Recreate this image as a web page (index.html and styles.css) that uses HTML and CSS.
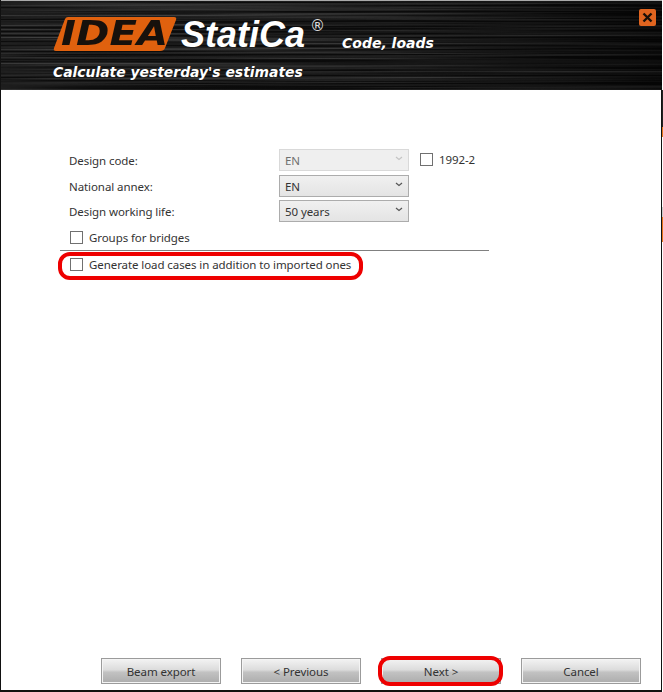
FILE: index.html
```html
<!DOCTYPE html>
<html lang="en">
<head>
	<meta charset="UTF-8">
	<title>Code, loads</title>
	<link rel="stylesheet" href="styles.css">
</head>
<body>
	<div class="window">
		<div class="header">
			<svg class="streaks" width="662" height="90">
				<defs>
					<filter id="brushed" x="0" y="0" width="100%" height="100%">
						<feTurbulence type="fractalNoise" baseFrequency="0.002 0.5" numOctaves="3" seed="7"/>
						<feColorMatrix values="0 0 0 0 1  0 0 0 0 1  0 0 0 0 1  1.4 0 0 0 -0.5"/>
					</filter>
					<linearGradient id="fade" x1="0" x2="1" y1="0" y2="0">
						<stop offset="0" stop-color="#000" stop-opacity="0"/>
						<stop offset="0.6" stop-color="#000" stop-opacity="0.1"/>
						<stop offset="1" stop-color="#000" stop-opacity="0.6"/>
					</linearGradient>
				</defs>
				<rect width="662" height="90" fill="#0c0c0c"/>
				<rect width="662" height="90" filter="url(#brushed)" opacity="0.36"/>
				<rect width="662" height="90" fill="url(#fade)"/>
			</svg>
			<div class="logo">
				<svg class="logo-plate" width="124" height="36" viewBox="0 0 124 36">
					<path d="M15 1H121Q124 1 123 4L112 32Q111 35 107 35H3Q0 35 1 32L12 3Q13 1 15 1Z" fill="#e0610e"/>
				</svg>
				<span class="logo-text">IDEA</span>
			</div>
			<span class="brand">StatiCa</span>
			<span class="reg">®</span>
			<span class="section">Code, loads</span>
			<span class="tagline">Calculate yesterday's estimates</span>
			<button class="close">
				<svg width="11" height="11" viewBox="0 0 11 11"><path d="M1.5 1.5L9.5 9.5M9.5 1.5L1.5 9.5" stroke="#1a1008" stroke-width="2.4"/></svg>
			</button>
		</div>

		<div class="content">
			<div class="form">
				<div class="row">
					<label class="field-label">Design code:</label>
					<div class="select disabled">EN<svg class="chevron" width="8" height="5" viewBox="0 0 8 5"><path d="M1 1L4 3.5L7 1" fill="none" stroke="#c4c4c4" stroke-width="1.2"/></svg></div>
					<label class="check code-check"><span class="box"></span>1992-2</label>
				</div>
				<div class="row">
					<label class="field-label">National annex:</label>
					<div class="select">EN<svg class="chevron" width="8" height="5" viewBox="0 0 8 5"><path d="M1 1L4 3.5L7 1" fill="none" stroke="#555" stroke-width="1.2"/></svg></div>
				</div>
				<div class="row">
					<label class="field-label">Design working life:</label>
					<div class="select">50 years<svg class="chevron" width="8" height="5" viewBox="0 0 8 5"><path d="M1 1L4 3.5L7 1" fill="none" stroke="#555" stroke-width="1.2"/></svg></div>
				</div>
				<label class="check bridges"><span class="box"></span>Groups for bridges</label>
				<div class="separator"></div>
				<label class="check generate"><span class="box"></span>Generate load cases in addition to imported ones<span class="mark mark-generate"></span></label>
			</div>
		</div>

		<div class="footer">
			<button class="btn">Beam export</button>
			<button class="btn">&lt; Previous</button>
			<button class="btn">Next &gt;<span class="mark mark-next"></span></button>
			<button class="btn">Cancel</button>
		</div>

		<span class="edge edge-dark"></span>
		<span class="edge edge-top"></span>
		<span class="edge edge-grey"></span>
		<span class="edge edge-bottom"></span>
	</div>
</body>
</html>
```

FILE: styles.css
```css
* {
	box-sizing: border-box;
}
body {
	margin: 0;
	background: #fff;
	font-family: "Noto Sans", "Open Sans", sans-serif;
	font-size: 11.5px;
	letter-spacing: -0.08px;
	color: #333;
}
.window {
	position: relative;
	display: flex;
	flex-direction: column;
	width: 662px;
	height: 692px;
	border-left: 1px solid #111;
	border-right: 1px solid #111;
	border-bottom: 2px solid #111;
	background: #fff;
}

/* header */
.header {
	position: relative;
	flex: none;
	height: 90px;
	margin-right: -1px;
	border-top: 1px solid #aaa;
	background: #0c0c0c;
	overflow: hidden;
	letter-spacing: 0;
}
.streaks {
	position: absolute;
	left: 0;
	top: 0;
}
.logo {
	position: absolute;
	left: 52px;
	top: 15px;
	width: 124px;
	height: 36px;
}
.logo-plate {
	display: block;
}
.logo-text {
	position: absolute;
	left: 8px;
	top: 0;
	font-family: "DejaVu Sans", sans-serif;
	font-size: 33px;
	line-height: 36px;
	font-weight: bold;
	font-style: italic;
	color: #17110c;
	white-space: nowrap;
	transform-origin: left center;
	transform: scaleX(1.22);
}
.brand,
.section,
.tagline,
.reg {
	position: absolute;
	color: #fff;
	font-family: "DejaVu Sans", sans-serif;
	font-weight: bold;
	font-style: italic;
	white-space: nowrap;
}
.brand {
	left: 180px;
	top: 13px;
	font-family: "Liberation Sans", sans-serif;
	font-size: 36px;
	line-height: 42px;
}
.reg {
	left: 309px;
	top: 17px;
	font-size: 15px;
	font-weight: normal;
	line-height: 16px;
	color: #ddd;
}
.section {
	left: 341px;
	top: 34px;
	font-size: 14px;
	line-height: 16px;
}
.tagline {
	left: 52px;
	top: 63px;
	font-size: 13.9px;
	line-height: 16px;
}
.close {
	position: absolute;
	left: 638px;
	top: 8px;
	display: flex;
	align-items: center;
	justify-content: center;
	width: 17px;
	height: 17px;
	padding: 0;
	border: 0;
	border-radius: 2px;
	background: #e0641f;
}

/* form */
.content {
	flex: 1;
	padding: 59px 0 0 59px;
}
.form {
	display: flex;
	flex-direction: column;
	width: 429px;
}
.row {
	display: flex;
	align-items: center;
	height: 22px;
	margin-bottom: 3.5px;
}
.field-label {
	width: 219px;
	padding: 1px 0 0 9px;
}
.select {
	display: flex;
	align-items: center;
	justify-content: space-between;
	width: 130px;
	height: 22px;
	padding: 1px 5px 0;
	border: 1px solid #acacac;
	background: linear-gradient(#f0f0f0, #e4e4e4);
}
.select.disabled {
	border-color: #d9d9d9;
	background: #efefef;
	color: #6f6f6f;
}
.chevron {
	margin-top: -4px;
}
.check {
	display: flex;
	align-items: center;
	gap: 6px;
}
.box {
	flex: none;
	width: 13px;
	height: 13px;
	border: 1px solid #707070;
	background: #fff;
}
.code-check {
	margin: -1px 0 0 11px;
}
.bridges {
	margin: 2px 0 0 10px;
	height: 20px;
}
.separator {
	height: 1px;
	margin-top: 2px;
	background: #808080;
}
.generate {
	position: relative;
	height: 20px;
	margin: 4px 0 0 10px;
}

/* red highlights */
.mark {
	position: absolute;
	border: 4px solid #ee0000;
	border-radius: 12px;
	pointer-events: none;
}
.mark-generate {
	left: -12px;
	top: -3px;
	width: 305px;
	height: 28px;
}
.mark-next {
	left: -4px;
	top: -3px;
	width: 125px;
	height: 30px;
}

/* buttons */
.footer {
	flex: none;
	display: flex;
	gap: 20px;
	padding: 0 0 6px 100px;
}
.btn {
	position: relative;
	width: 120px;
	height: 26px;
	padding: 0;
	border: 1px solid #9b9b9b;
	box-shadow: inset 0 0 0 1px #f4f4f4;
	background: linear-gradient(#f3f3f3 0, #dcdcdc 45%, #c2c2c2 55%, #acacac 100%);
	font-family: inherit;
	font-size: 11.5px;
	letter-spacing: inherit;
	color: #333;
}

/* little pieces on the window's right edge */
.edge {
	position: absolute;
	right: -2px;
	width: 1px;
	background: #e8741a;
}
.edge-dark {
	top: 90px;
	height: 37px;
	background: #222;
}
.edge-top {
	top: 127px;
	height: 10px;
}
.edge-grey {
	top: 207px;
	height: 10px;
	background: #ccc;
}
.edge-bottom {
	top: 217px;
	height: 25px;
}
```
